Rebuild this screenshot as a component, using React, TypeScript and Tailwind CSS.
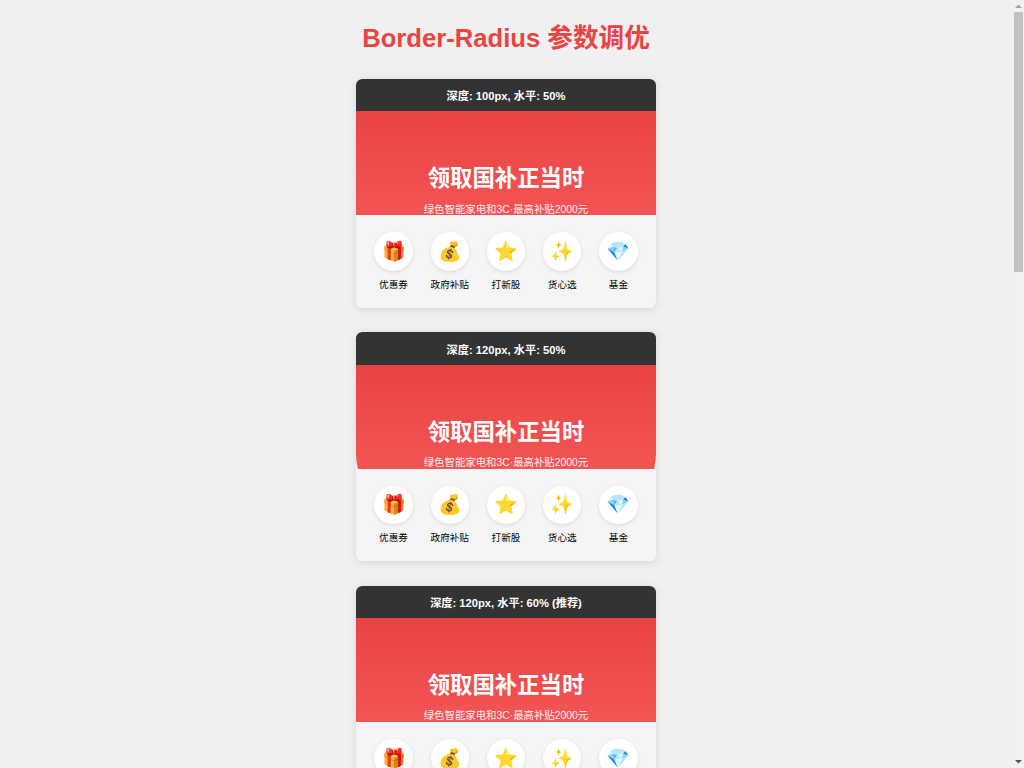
const services = [
  { icon: '🎁', label: '优惠券' },
  { icon: '💰', label: '政府补贴' },
  { icon: '⭐', label: '打新股' },
  { icon: '✨', label: '货心选' },
  { icon: '💎', label: '基金' },
];

const cards = [
  { title: '深度: 100px, 水平: 50%', curve: 'rounded-b-[50%_80px]' },
  { title: '深度: 120px, 水平: 50%', curve: 'rounded-b-[50%_95px]' },
  { title: '深度: 120px, 水平: 60% (推荐)', curve: 'rounded-b-[60%_96px]' },
];

function Card({ title, curve }: { title: string; curve: string }) {
  return (
    <section className="h-[229.2px] w-[300.4px] shrink-0 overflow-hidden rounded-[6.4px] bg-[#f5f5f5] shadow-[0_1.6px_8px_rgba(0,0,0,0.1)]">
      <div className="flex h-[32.6px] items-center justify-center bg-[#333] pt-[3px] text-[11.2px] font-bold text-white">
        {title}
      </div>
      <div className="h-[104px] overflow-hidden">
        <div className={`flex h-[184px] flex-col items-center bg-linear-to-b from-[#e94343] to-[#fa6161] pt-[50px] text-white ${curve}`}>
          <h2 className="text-[22.4px] leading-[36px] font-bold">领取国补正当时</h2>
          <p className="mt-[4.2px] text-[10.4px] leading-[15px] opacity-90">绿色智能家电和3C·最高补贴2000元</p>
        </div>
      </div>
      <div className="flex px-[9.6px] pt-[16.8px]">
        {services.map((s) => (
          <div key={s.label} className="flex flex-1 flex-col items-center">
            <div className="flex size-[38.4px] items-center justify-center rounded-full bg-white text-[19.2px] leading-none shadow-[0_1.6px_4px_rgba(0,0,0,0.1)]">
              {s.icon}
            </div>
            <div className="mt-[7.4px] text-[9.6px] leading-[14px] whitespace-nowrap text-black">{s.label}</div>
          </div>
        ))}
      </div>
    </section>
  );
}

export default function App() {
  return (
    <div className="flex h-screen overflow-hidden bg-[#f0f0f0] font-['Liberation_Sans','Noto_Sans_CJK_SC',sans-serif]">
      <main className="flex flex-1 flex-col items-center overflow-hidden">
        <h1 className="mt-[17px] h-[61.8px] shrink-0 text-[25.63px] leading-[42px] font-bold text-[#e94444]">
          Border-Radius 参数调优
        </h1>
        <div className="flex flex-col gap-[24.2px]">
          {cards.map((c) => (
            <Card key={c.title} {...c} />
          ))}
        </div>
      </main>
      <div className="flex w-[12px] flex-col items-center justify-between bg-[#f1f1f1]">
        <div className="flex flex-col items-center">
          <svg className="h-[12px] w-[7px]" viewBox="0 0 7 12">
            <path d="M0 8 3.5 4.5 7 8Z" fill="#a3a3a3" />
          </svg>
          <div className="h-[260px] w-[9px] bg-[#c1c1c1]" />
        </div>
        <svg className="h-[12px] w-[7px]" viewBox="0 0 7 12">
          <path d="M0 4 3.5 7.5 7 4Z" fill="#505050" />
        </svg>
      </div>
    </div>
  );
}
